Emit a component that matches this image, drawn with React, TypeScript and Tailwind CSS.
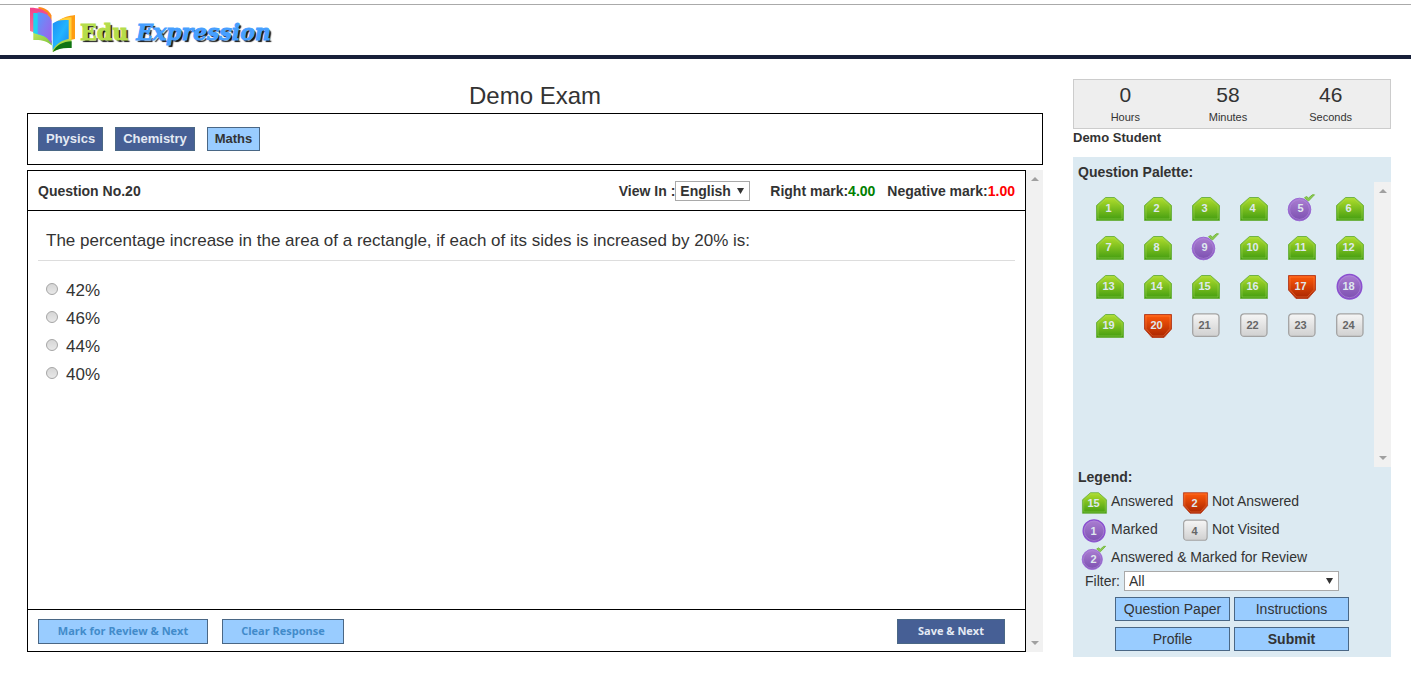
import { useState } from "react";

type Status = "answered" | "notAnswered" | "marked" | "notVisited" | "answeredMarked";

const statusOf = (n: number): Status => {
  if (n === 5 || n === 9) return "answeredMarked";
  if (n === 18) return "marked";
  if (n === 17 || n === 20) return "notAnswered";
  if (n > 20) return "notVisited";
  return "answered";
};

const questions = Array.from({ length: 24 }, (_, i) => ({ n: i + 1, status: statusOf(i + 1) }));

function Gradients() {
  return (
    <svg width="0" height="0" className="absolute" aria-hidden="true">
      <defs>
        <linearGradient id="green" x1="0" y1="0" x2="0" y2="1">
          <stop offset="0" stopColor="#b2de2c" />
          <stop offset="1" stopColor="#419c10" />
        </linearGradient>
        <linearGradient id="red" x1="0" y1="0" x2="0" y2="1">
          <stop offset="0" stopColor="#ff5a0a" />
          <stop offset="1" stopColor="#a82400" />
        </linearGradient>
        <linearGradient id="violet" x1="0" y1="0" x2="0" y2="1">
          <stop offset="0" stopColor="#ab7fd2" />
          <stop offset="1" stopColor="#7b4fb0" />
        </linearGradient>
        <linearGradient id="grey" x1="0" y1="0" x2="0" y2="1">
          <stop offset="0" stopColor="#f6f6f6" />
          <stop offset="1" stopColor="#d0d0d0" />
        </linearGradient>
      </defs>
    </svg>
  );
}

function Shape({ status }: { status: Status }) {
  return (
    <svg viewBox="0 0 28 24" className="absolute inset-0 h-full w-full overflow-visible" aria-hidden="true">
      {status === "answered" && (
        <>
          <path d="M.5 23.500V8.500L9.500.5h9l9 8v15z" fill="url(#green)" stroke="#6fb347" />
          <path d="M2 22V9.200L10 2h8l8 7.200V22z" fill="none" stroke="#a5da62" strokeOpacity=".45" />
        </>
      )}
      {status === "notAnswered" && (
        <>
          <path d="M.5.5h27v14.500L20 23.500H8L.5 15z" fill="url(#red)" stroke="#b84426" />
          <path d="M2 2h24v12.500L19.400 22H8.600L2 14.500z" fill="none" stroke="#ff9057" strokeOpacity=".4" />
        </>
      )}
      {status === "marked" && (
        <>
          <circle cx="13.500" cy="11.800" r="12.300" fill="url(#violet)" stroke="#8a4fd0" strokeWidth="1.400" />
          <circle cx="13.500" cy="11.800" r="10.900" fill="none" stroke="#b48ae0" strokeOpacity=".6" />
        </>
      )}
      {status === "answeredMarked" && (
        <>
          <circle cx="11.500" cy="12.500" r="11.300" fill="url(#violet)" stroke="#9a68d6" />
          <circle cx="11.500" cy="12.500" r="9.900" fill="none" stroke="#b48ae0" strokeOpacity=".6" />
          <path d="M16.500.8l2-1.300 2 1.600 3.800-3.300h2.200L20.500 4z" fill="#8cca52" stroke="#75b83e" strokeWidth="1" />
        </>
      )}
      {status === "notVisited" && (
        <rect x=".7" y="-.2" width="26.300" height="22.600" rx="3.500" fill="url(#grey)" stroke="#a3a3a3" strokeWidth="1.300" />
      )}
    </svg>
  );
}

const numberColor = (s: Status) => (s === "notVisited" ? "text-[#666]" : "text-[#dfe9ee]");

function LegendItem({ status, count, label }: { status: Status; count: number; label: string }) {
  return (
    <div className="flex h-7 items-center gap-1">
      <span className={`relative mt-1 flex h-[22px] w-[25px] items-center justify-center pr-[2px] text-[11px] font-bold ${numberColor(status)}`}>
        <Shape status={status} />
        <span className="relative">{count}</span>
      </span>
      <span className="whitespace-nowrap text-sm">{label}</span>
    </div>
  );
}

function ScrollTrack() {
  return (
    <div className="flex w-[17px] shrink-0 flex-col items-center justify-between bg-[#f1f1f1] py-[7px]" aria-hidden="true">
      <svg width="8" height="4" viewBox="0 0 8 4"><path d="M0 4l4-4 4 4z" fill="#a0a0a0" /></svg>
      <svg width="8" height="4" viewBox="0 0 8 4"><path d="M0 0l4 4 4-4z" fill="#a0a0a0" /></svg>
    </div>
  );
}

function SelectArrow() {
  return (
    <svg width="7" height="6" viewBox="0 0 7 6" className="pointer-events-none absolute right-[6px] top-[7px]" aria-hidden="true">
      <path d="M0 0h7L3.500 6z" fill="#333" />
    </svg>
  );
}

function Logo() {
  return (
    <a href="#" className="flex items-center gap-1" aria-label="Edu Expression">
      <svg width="46" height="46" viewBox="0 0 46 46" aria-hidden="true">
        <defs>
          <linearGradient id="pageLeft" x1="0" y1="0" x2="1" y2="1">
            <stop offset="0" stopColor="#4f9dff" />
            <stop offset=".45" stopColor="#7f7cf2" />
            <stop offset="1" stopColor="#a35be8" />
          </linearGradient>
          <linearGradient id="pageRight" x1="0" y1="0" x2="1" y2="1">
            <stop offset="0" stopColor="#1f8df5" />
            <stop offset=".5" stopColor="#22b4ff" />
            <stop offset="1" stopColor="#1a84ee" />
          </linearGradient>
          <linearGradient id="pink" x1="0" y1="0" x2="0" y2="1">
            <stop offset="0" stopColor="#f0428a" />
            <stop offset="1" stopColor="#ff7f98" />
          </linearGradient>
          <linearGradient id="leaf" x1="0" y1="0" x2="1" y2="1">
            <stop offset="0" stopColor="#c3e65c" />
            <stop offset="1" stopColor="#7cc63c" />
          </linearGradient>
        </defs>
        <path d="M8.500 0c6 .5 10.500 3 13 8.500V14L8.500 7z" fill="#ff8a1c" />
        <path d="M0 .7c9 0 14 2 18 6V30L0 24z" fill="url(#pink)" />
        <path d="M3.300 24c8 1 14 4 18.500 10v4.500C17 34 11 32.500 3.300 33z" fill="url(#leaf)" />
        <path d="M3.300 6c7 0 12 1 16 5v20L3.300 26z" fill="#21d3f0" />
        <path d="M7.700 5.300c7 .3 12.500 3 14 8.700v23.500C18 31 14 28 7.700 27z" fill="url(#pageLeft)" />
        <path d="M29 13.500c5-3.500 9-4.500 16-5.500v24l-9 2z" fill="#ff9d12" />
        <path d="M26 15c5-3.500 9-4.700 15.500-4.700V33L30 38z" fill="#ffd03a" />
        <path d="M22.700 38c5-4.500 11-6 19-5.500L41 36l-18.300 9z" fill="#a6d94a" />
        <path d="M22.700 45c4-7 10-10.500 19-10.700V41c-8-.5-14 .5-19 4z" fill="#0f7412" />
        <path d="M22.700 16.500c4-3 8-4 16-3.500v19c-6 1-12 4-16 11z" fill="url(#pageRight)" />
      </svg>
      <span className="flex gap-2 pt-1 font-['DejaVu_Serif',serif] text-[22px] font-bold leading-6 [text-shadow:2px_2px_1px_#111] [-webkit-text-stroke:1px_currentColor]">
        <span className="text-[#b5dd4b]">Edu</span>
        <span className="italic text-[#469fff]">Expression</span>
      </span>
    </a>
  );
}

const tabs = ["Physics", "Chemistry", "Maths"];
const options = ["42%", "46%", "44%", "40%"];
const timer = [
  ["0", "Hours"],
  ["58", "Minutes"],
  ["46", "Seconds"],
];

export default function App() {
  const [tab, setTab] = useState("Maths");
  const [answer, setAnswer] = useState("");
  const sideButton = "h-6 border border-[#4a6785] bg-[#99ccff] text-sm leading-5";

  return (
    <div className="min-h-screen bg-white pt-1 font-['Liberation_Sans',Arial,sans-serif] text-[#333]">
      <Gradients />
      <header className="flex h-[55px] items-center border-b-4 border-t border-b-[#172039] border-t-[#aaa] pl-[30px]">
        <Logo />
      </header>

      <div className="flex items-start gap-[30px] pl-[27px] pr-5 pt-5">
        <main className="min-w-0 flex-1">
          <h1 className="h-[34px] text-center text-2xl leading-[34px]">Demo Exam</h1>

          <nav className="flex h-[52px] items-center gap-3 border border-black px-[10px]">
            {tabs.map((t) => (
              <button
                key={t}
                type="button"
                onClick={() => setTab(t)}
                className={`h-6 border border-[#4a6785] px-[7px] text-[13px] font-bold leading-5 ${
                  t === tab ? "bg-[#99ccff] text-[#333]" : "bg-[#465f95] text-[#e4eaf4]"
                }`}
              >
                {t}
              </button>
            ))}
          </nav>

          <div className="mt-[5px] flex">
            <section className="min-w-0 flex-1 border border-black">
              <div className="flex h-10 items-center border-b border-black px-[10px] text-sm font-bold">
                <h2>Question No.20</h2>
                <div className="ml-auto flex items-center">
                  <label htmlFor="language">View In :</label>
                  <span className="relative">
                    <select id="language" className="block h-5 w-[75px] appearance-none border border-[#a9a9a9] bg-white pl-1 text-sm font-bold leading-4">
                      <option>English</option>
                      <option>Hindi</option>
                    </select>
                    <SelectArrow />
                  </span>
                </div>
                <p className="ml-5">Right mark:<span className="text-[#008000]">4.00</span></p>
                <p className="ml-3">Negative mark:<span className="text-[#f00]">1.00</span></p>
              </div>

              <div className="min-h-[399px] border-b border-black px-[10px]">
                <p id="question" className="h-[50px] border-b border-[#ddd] px-2 pt-4 text-[17px] leading-7">
                  The percentage increase in the area of a rectangle, if each of its sides is increased by 20% is:
                </p>
                <div role="radiogroup" aria-labelledby="question" className="px-2 pt-4">
                  {options.map((o) => (
                    <label key={o} className="flex h-7 items-center gap-2 text-[17px]">
                      <input
                        type="radio"
                        name="answer"
                        checked={answer === o}
                        onChange={() => setAnswer(o)}
                        className="mb-1 h-3 w-3 appearance-none rounded-full border border-[#a5a5a5] bg-linear-to-b from-[#d6d6d6] to-[#e8e8e8] checked:border-4 checked:border-[#555]"
                      />
                      {o}
                    </label>
                  ))}
                </div>
              </div>

              <div className="flex h-[41px] items-center gap-[14px] pl-[10px] pr-5 pt-px font-['Open_Sans',sans-serif] text-[11px] font-bold">
                <button type="button" className="h-[25px] w-[170px] border border-[#4a6785] bg-[#99ccff] pt-px text-[#428bca]">
                  Mark for Review &amp; Next
                </button>
                <button type="button" onClick={() => setAnswer("")} className="h-[25px] w-[122px] border border-[#4a6785] bg-[#99ccff] pt-px text-[#428bca]">
                  Clear Response
                </button>
                <button type="button" className="ml-auto h-[25px] w-[108px] border border-[#4a6785] bg-[#465f95] pt-px text-[#e4eaf4]">
                  Save &amp; Next
                </button>
              </div>
            </section>
            <ScrollTrack />
          </div>
        </main>

        <aside className="w-[318px] shrink-0">
          <dl className="grid h-[50px] grid-cols-3 border border-[#ccc] bg-[#eee] pr-2 text-center">
            {timer.map(([value, unit]) => (
              <div key={unit} className="flex flex-col-reverse justify-end">
                <dt className="text-[11px] leading-4">{unit}</dt>
                <dd className="text-[21px] leading-[29px]">{value}</dd>
              </div>
            ))}
          </dl>
          <p className="h-7 text-[13px] font-bold leading-[18px]">Demo Student</p>

          <div className="bg-[#dceaf2] pb-[6px]">
            <h2 className="h-[25px] pl-[5px] pt-[5px] text-sm font-bold leading-5">Question Palette:</h2>
            <div className="flex min-h-[285px]">
              <div className="grid flex-1 grid-cols-6 content-start justify-items-center gap-y-[15px] pl-[13px] pt-[15px]">
                {questions.map(({ n, status }) => (
                  <button
                    key={n}
                    type="button"
                    className={`relative flex h-6 w-7 items-center justify-center pb-[2px] pr-[3px] text-[11px] font-bold ${numberColor(status)}`}
                  >
                    <Shape status={status} />
                    <span className="relative">{n}</span>
                  </button>
                ))}
              </div>
              <ScrollTrack />
            </div>

            <h2 className="pl-[5px] text-sm font-bold leading-5">Legend:</h2>
            <div className="grid grid-cols-[101px_1fr] pl-[9px]">
              <LegendItem status="answered" count={15} label="Answered" />
              <LegendItem status="notAnswered" count={2} label="Not Answered" />
              <LegendItem status="marked" count={1} label="Marked" />
              <LegendItem status="notVisited" count={4} label="Not Visited" />
              <div className="col-span-2">
                <LegendItem status="answeredMarked" count={2} label="Answered & Marked for Review" />
              </div>
            </div>

            <div className="flex items-center gap-1 pl-3 text-sm">
              <label htmlFor="filter">Filter:</label>
              <span className="relative">
                <select id="filter" className="block h-5 w-[215px] appearance-none border border-[#a9a9a9] bg-white pl-1 text-sm leading-4">
                  <option>All</option>
                  <option>Answered</option>
                  <option>Not Answered</option>
                </select>
                <SelectArrow />
              </span>
            </div>

            <div className="mt-[6px] grid grid-cols-2 gap-x-1 gap-y-[6px] pl-[42px] pr-[42px]">
              <button type="button" className={sideButton}>Question Paper</button>
              <button type="button" className={sideButton}>Instructions</button>
              <button type="button" className={sideButton}>Profile</button>
              <button type="button" className={`${sideButton} font-bold`}>Submit</button>
            </div>
          </div>
        </aside>
      </div>
    </div>
  );
}
